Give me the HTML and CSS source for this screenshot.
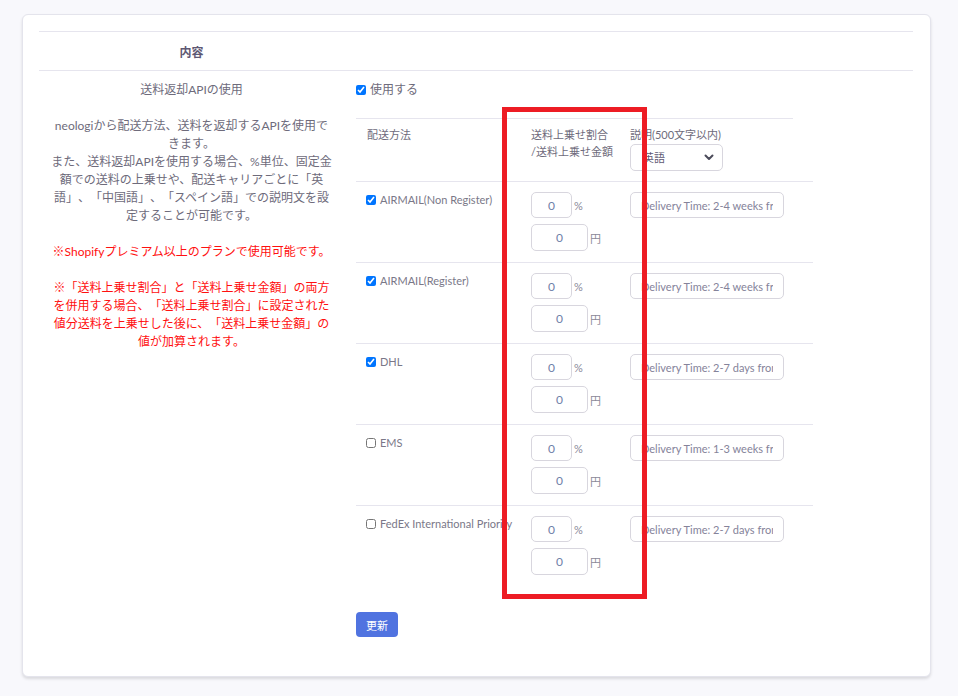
FILE: index.html
```html
<!DOCTYPE html>
<html lang="ja">
<head>
<meta charset="utf-8">
<title>送料返却API</title>
<link rel="stylesheet" href="styles.css">
</head>
<body>
<div class="page">
  <div class="card">
    <div class="tbl">
      <div class="head-row">
        <div class="head-cell">内容</div>
        <div class="head-cell"></div>
      </div>
      <div class="body-row">
        <div class="left-cell">
          <p>送料返却APIの使用</p>
          <p class="gap">neologiから配送方法、送料を返却するAPIを使用できます。<br>また、送料返却APIを使用する場合、%単位、固定金額での送料の上乗せや、配送キャリアごとに「英語」、「中国語」、「スペイン語」での説明文を設定することが可能です。</p>
          <p class="gap red">※Shopifyプレミアム以上のプランで使用可能です。</p>
          <p class="gap red">※「送料上乗せ割合」と「送料上乗せ金額」の両方を併用する場合、「送料上乗せ割合」に設定された値分送料を上乗せした後に、「送料上乗せ金額」の値が加算されます。</p>
        </div>
        <div class="right-cell">
          <label class="use"><input type="checkbox" class="cb" checked><span>使用する</span></label>
          <div class="ship">
            <div class="ship-head">
              <div class="sc">配送方法</div>
              <div class="sc">送料上乗せ割合<br>/送料上乗せ金額</div>
              <div class="sc">
                <div>説明(500文字以内)</div>
                <div class="sel">
                  <select><option>英語</option></select>
                  <svg class="chev" width="10" height="7" viewBox="0 0 10 7"><path d="M1.5 1.5 L5 5 L8.5 1.5" fill="none" stroke="#4b4b5a" stroke-width="2" stroke-linecap="round" stroke-linejoin="round"/></svg>
                </div>
              </div>
            </div>
            <div class="ship-row">
              <div class="sc method"><input type="checkbox" class="cb" checked><span>AIRMAIL(Non Register)</span></div>
              <div class="sc amt">
                <div class="line"><input class="pct" type="text" value="0"><span>%</span></div>
                <div class="line"><input class="yen" type="text" value="0"><span>円</span></div>
              </div>
              <div class="sc"><input class="desc" type="text" value="Delivery Time: 2-4 weeks from shipping"></div>
            </div>
            <div class="ship-row">
              <div class="sc method"><input type="checkbox" class="cb" checked><span>AIRMAIL(Register)</span></div>
              <div class="sc amt">
                <div class="line"><input class="pct" type="text" value="0"><span>%</span></div>
                <div class="line"><input class="yen" type="text" value="0"><span>円</span></div>
              </div>
              <div class="sc"><input class="desc" type="text" value="Delivery Time: 2-4 weeks from shipping"></div>
            </div>
            <div class="ship-row">
              <div class="sc method"><input type="checkbox" class="cb" checked><span>DHL</span></div>
              <div class="sc amt">
                <div class="line"><input class="pct" type="text" value="0"><span>%</span></div>
                <div class="line"><input class="yen" type="text" value="0"><span>円</span></div>
              </div>
              <div class="sc"><input class="desc" type="text" value="Delivery Time: 2-7 days from shipping"></div>
            </div>
            <div class="ship-row">
              <div class="sc method"><input type="checkbox" class="cb"><span>EMS</span></div>
              <div class="sc amt">
                <div class="line"><input class="pct" type="text" value="0"><span>%</span></div>
                <div class="line"><input class="yen" type="text" value="0"><span>円</span></div>
              </div>
              <div class="sc"><input class="desc" type="text" value="Delivery Time: 1-3 weeks from shipping"></div>
            </div>
            <div class="ship-row last">
              <div class="sc method"><input type="checkbox" class="cb"><span>FedEx International Priority</span></div>
              <div class="sc amt">
                <div class="line"><input class="pct" type="text" value="0"><span>%</span></div>
                <div class="line"><input class="yen" type="text" value="0"><span>円</span></div>
              </div>
              <div class="sc"><input class="desc" type="text" value="Delivery Time: 2-7 days from shipping"></div>
            </div>
          </div>
          <button class="btn">更新</button>
        </div>
      </div>
    </div>
  </div>
  <div class="annot"></div>
</div>
</body>
</html>
```

FILE: styles.css
```css
* { box-sizing: border-box; }
html, body { margin: 0; padding: 0; }
body {
  background: #f8f8fc;
  font-family: "Lato", "Noto Sans CJK JP", sans-serif;
  color: #6e6b7b;
  font-size: 12px;
  text-spacing-trim: space-all;
}
.page {
  position: relative;
  padding: 14px 27px 0 22px;
  height: 696px;
}
.card {
  background: #fff;
  border: 1px solid #e4e4ec;
  border-radius: 6px;
  box-shadow: 0 2px 3px rgba(0, 0, 0, 0.12);
  padding: 16px 17px 16px 16px;
  width: 909px;
}
.tbl { width: 874px; }
.head-row {
  display: grid;
  grid-template-columns: 305px 1fr;
  border-top: 1px solid #e6e5ee;
  border-bottom: 1px solid #e6e5ee;
  height: 40px;
}
.head-cell {
  display: flex;
  align-items: center;
  justify-content: center;
  font-weight: 700;
  color: #5e5873;
  font-size: 12px;
}
.body-row {
  display: grid;
  grid-template-columns: 305px 1fr;
}
.left-cell {
  padding: 10px 12px;
  text-align: center;
  line-height: 18px;
}
.left-cell p { margin: 0; }
.left-cell p.gap { margin-top: 18px; }
.left-cell .red { color: #ff1010; }
.right-cell {
  padding: 10px 12px 23px 12px;
}
.use {
  display: flex;
  align-items: center;
  line-height: 18px;
  gap: 4px;
}
.cb {
  width: 10px;
  height: 10px;
  margin: 0;
  flex: none;
}
.ship { margin-top: 19px; width: 457px; }
.ship-head {
  display: grid;
  grid-template-columns: 164px 99px 174px;
  width: 437px;
  border-top: 1px solid #e6e5ee;
  padding: 7px 0 10px;
  font-size: 11px;
  line-height: 17px;
  white-space: nowrap;
}
.sc { padding: 0 11px; }
.sel {
  position: relative;
  width: 93px;
  margin-top: 1px;
}
.sel select {
  appearance: none;
  -webkit-appearance: none;
  width: 93px;
  height: 27px;
  border: 1px solid #d8d6de;
  border-radius: 5px;
  background: #fff;
  padding: 0 0 0 12px;
  font-family: "Lato", "Noto Sans CJK JP", sans-serif;
  font-size: 11px;
  color: #5e5873;
}
.chev {
  position: absolute;
  right: 9px;
  top: 10px;
  pointer-events: none;
}
.ship-row {
  display: grid;
  grid-template-columns: 164px 99px 194px;
  border-top: 1px solid #e6e5ee;
  padding: 10px 0 11px;
  font-size: 11px;
}
.method {
  display: flex;
  align-items: flex-start;
  gap: 4px;
  padding-left: 10px;
  padding-right: 0;
  white-space: nowrap;
  line-height: 15px;
}
.method .cb { margin-top: 3px; }
.method span { color: #7a7888; }
.amt {
  display: flex;
  flex-direction: column;
  gap: 6px;
}
.line {
  display: flex;
  align-items: center;
  gap: 2px;
  color: #8a8898;
}
input[type="text"] {
  border: 1px solid #d8d6de;
  border-radius: 5px;
  background: #fff;
  font-family: "Lato", "Noto Sans CJK JP", sans-serif;
  outline: none;
}
.pct, .yen {
  text-align: center;
  color: #6f7fa8;
  font-size: 12px;
  padding: 0;
}
.pct { width: 41px; height: 26px; }
.yen { width: 57px; height: 27px; }
.desc {
  width: 154px;
  height: 26px;
  padding: 0 10px;
  font-size: 11px;
  color: #85839a;
}
.btn {
  margin-top: 26px;
  background: #5073e0;
  color: #fff;
  border: none;
  border-radius: 4px;
  width: 42px;
  height: 25px;
  font-family: "Lato", "Noto Sans CJK JP", sans-serif;
  font-size: 11px;
  padding: 0;
}
.annot {
  position: absolute;
  left: 502px;
  top: 107px;
  width: 145px;
  height: 492px;
  border: 5px solid #ed1c24;
}
```
